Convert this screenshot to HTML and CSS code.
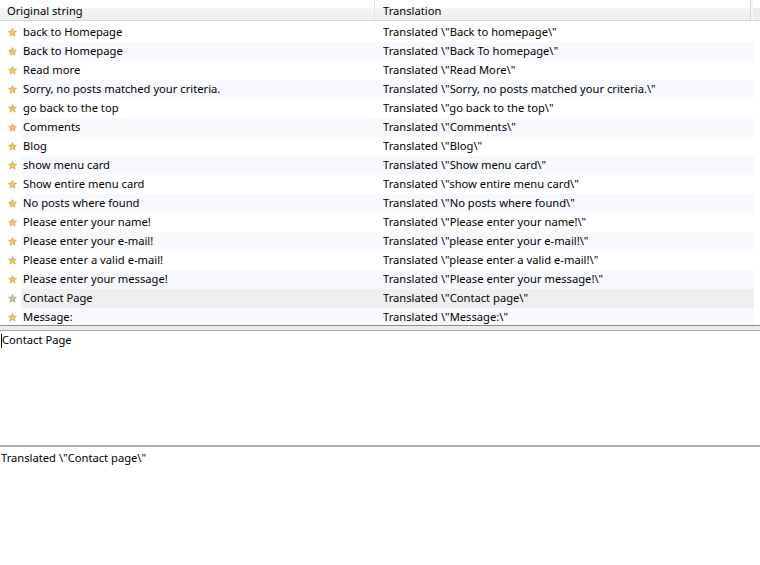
FILE: index.html
```html
<!DOCTYPE html>
<html lang="en">
<head>
    <meta charset="UTF-8">
    <title>Translations</title>
    <link rel="stylesheet" href="styles.css">
</head>
<body>
    <div class="list">
        <div class="header">
            <div class="col col-orig">Original string</div>
            <div class="col col-trans">Translation</div>
            <div class="col col-end"></div>
        </div>
        <div id="rows" class="rows"></div>
    </div>

    <div class="splitter"></div>

    <div class="source">
        <span class="caret"></span>Contact Page
    </div>

    <div class="target">Translated \"Contact page\"</div>

    <script>
        const strings = [
            ['back to Homepage', 'Back to homepage'],
            ['Back to Homepage', 'Back To homepage'],
            ['Read more', 'Read More'],
            ['Sorry, no posts matched your criteria.', 'Sorry, no posts matched your criteria.'],
            ['go back to the top', 'go back to the top'],
            ['Comments', 'Comments'],
            ['Blog', 'Blog'],
            ['show menu card', 'Show menu card'],
            ['Show entire menu card', 'show entire menu card'],
            ['No posts where found', 'No posts where found'],
            ['Please enter your name!', 'Please enter your name!'],
            ['Please enter your e-mail!', 'please enter your e-mail!'],
            ['Please enter a valid e-mail!', 'please enter a valid e-mail!'],
            ['Please enter your message!', 'Please enter your message!'],
            ['Contact Page', 'Contact page'],
            ['Message:', 'Message:']
        ];

        const star = '<svg class="star" width="9" height="9" viewBox="0 0 10 10">' +
            '<path d="M5 0.6 L6.3 3.5 L9.4 3.7 L7 5.8 L7.8 9 L5 7.3 L2.2 9 L3 5.8 L0.6 3.7 L3.7 3.5 Z"/></svg>';

        const rows = document.getElementById('rows');
        strings.forEach(function (s, i) {
            const row = document.createElement('div');
            row.className = 'row';
            if (i % 2 === 1) row.classList.add('alt');
            if (s[0] === 'Contact Page') row.classList.add('selected');
            row.innerHTML = '<div class="icon">' + star + '</div>' +
                '<div class="cell cell-orig"></div><div class="cell cell-trans"></div>';
            row.querySelector('.cell-orig').textContent = s[0];
            row.querySelector('.cell-trans').textContent = 'Translated \\"' + s[1] + '\\"';
            rows.appendChild(row);
        });
    </script>
</body>
</html>
```

FILE: styles.css
```css
body {
    margin: 0;
    font-family: "Noto Sans", "Open Sans", sans-serif;
    font-size: 11.2px;
    color: #000;
    background: #fff;
    overflow: hidden;
}

.list {
    height: 325px;
    overflow: hidden;
}

/* column header */
.header {
    display: flex;
    height: 21px;
    line-height: 21px;
    background: linear-gradient(#fff 0, #fff 8px, #f4f5f7 8px, #eceef1 100%);
    border-bottom: 1px solid #d5d5d5;
    box-sizing: border-box;
}

.col {
    box-sizing: border-box;
    padding-left: 7px;
    white-space: nowrap;
}

.col-orig {
    width: 376px;
    border-right: 1px solid #e2e3e6;
}

.col-trans {
    width: 377px;
    padding-left: 8px;
    border-right: 1px solid #d8d8d8;
}

.col-end {
    flex: 1;
    border-left: 2px solid #f6f6f6;
    background: linear-gradient(#fff 0, #fff 8px, #ebecef 8px);
}

.rows {
    padding-top: 2px;
}

.row {
    display: flex;
    height: 19px;
    line-height: 17px;
    width: 754px;
}

.icon {
    width: 21px;
    flex: none;
    display: flex;
    align-items: center;
    justify-content: center;
    padding-left: 4px;
    box-sizing: border-box;
    background: #fff;
}

.star {
    fill: #f0c95a;
    stroke: #c89a3a;
    stroke-width: 0.7;
}

.row.alt .cell {
    background: #f8f9fc;
}

.row.selected .cell {
    background: #efefef;
}

.row.selected .star {
    fill: #c6c6a0;
    stroke: #9c9c80;
}

.cell {
    white-space: nowrap;
    overflow: hidden;
}

.cell-orig {
    width: 360px;
    padding-left: 2px;
}

.cell-trans {
    flex: 1;
}

.splitter {
    height: 4px;
    border-top: 1px solid #8c8c8c;
    border-bottom: 1px solid #a4a4a8;
    background: #ececee;
}

.source {
    height: 116px;
    padding: 1px 0 0 2px;
    line-height: 16px;
    box-sizing: border-box;
    border-bottom: 2px solid #ababab;
    position: relative;
}

.caret {
    position: absolute;
    left: 1px;
    top: 3px;
    width: 1px;
    height: 14px;
    background: #000;
}

.target {
    padding: 3px 0 0 1px;
    line-height: 16px;
}
```
